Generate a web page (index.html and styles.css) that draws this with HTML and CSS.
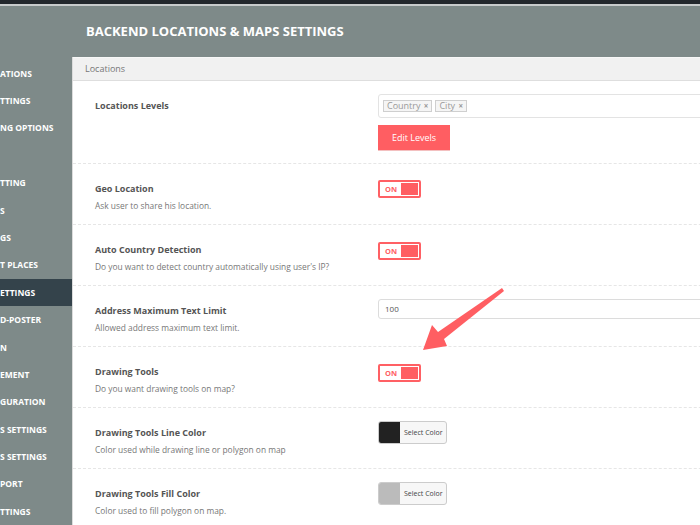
FILE: index.html
```html
<!DOCTYPE html>
<html>
<head>
<meta charset="utf-8">
<link rel="stylesheet" href="styles.css">
</head>
<body>
<div class="topbar"></div>
<div class="topline"></div>
<div class="layout">
  <nav class="sidebar">
    <div class="nav-item">ATIONS</div>
    <div class="nav-item">TTINGS</div>
    <div class="nav-item">NG OPTIONS</div>
    <div class="nav-item"></div>
    <div class="nav-item">TTING</div>
    <div class="nav-item">S</div>
    <div class="nav-item">GS</div>
    <div class="nav-item">T PLACES</div>
    <div class="nav-item active">ETTINGS</div>
    <div class="nav-item">D-POSTER</div>
    <div class="nav-item">N</div>
    <div class="nav-item">EMENT</div>
    <div class="nav-item">GURATION</div>
    <div class="nav-item">S SETTINGS</div>
    <div class="nav-item">S SETTINGS</div>
    <div class="nav-item">PORT</div>
    <div class="nav-item">TTINGS</div>
  </nav>
  <main class="main">
    <h1 class="page-title">BACKEND LOCATIONS &amp; MAPS SETTINGS</h1>
    <section class="panel">
      <div class="panel-head">Locations</div>
      <div class="row row-first">
        <div class="info"><div class="label">Locations Levels</div></div>
        <div class="ctrl ctrl-box">
          <div class="tagbox">
            <span class="tag">Country <span class="x">×</span></span>
            <span class="tag">City <span class="x">×</span></span>
          </div>
          <button class="btn">Edit Levels</button>
        </div>
      </div>
      <div class="row">
        <div class="info"><div class="label">Geo Location</div><div class="desc">Ask user to share his location.</div></div>
        <div class="ctrl ctrl-toggle first"><div class="toggle"><span class="on">ON</span><span class="knob"></span></div></div>
      </div>
      <div class="row">
        <div class="info"><div class="label">Auto Country Detection</div><div class="desc">Do you want to detect country automatically using user's IP?</div></div>
        <div class="ctrl ctrl-toggle"><div class="toggle"><span class="on">ON</span><span class="knob"></span></div></div>
      </div>
      <div class="row">
        <div class="info"><div class="label">Address Maximum Text Limit</div><div class="desc">Allowed address maximum text limit.</div></div>
        <div class="ctrl ctrl-box"><div class="input">100</div></div>
      </div>
      <div class="row">
        <div class="info"><div class="label">Drawing Tools</div><div class="desc">Do you want drawing tools on map?</div></div>
        <div class="ctrl ctrl-toggle"><div class="toggle"><span class="on">ON</span><span class="knob"></span></div></div>
      </div>
      <div class="row">
        <div class="info"><div class="label">Drawing Tools Line Color</div><div class="desc">Color used while drawing line or polygon on map</div></div>
        <div class="ctrl ctrl-box"><div class="picker"><span class="swatch dark"></span><span class="pick-label">Select Color</span></div></div>
      </div>
      <div class="row">
        <div class="info"><div class="label">Drawing Tools Fill Color</div><div class="desc">Color used to fill polygon on map.</div></div>
        <div class="ctrl ctrl-box"><div class="picker"><span class="swatch light"></span><span class="pick-label">Select Color</span></div></div>
      </div>
    </section>
  </main>
</div>
<svg class="arrow" width="700" height="525" viewBox="0 0 700 525">
  <polygon points="502,288 504,291 444,339 447,346 423,350 432,325 438,332" fill="#ff5e62"/>
</svg>
</body>
</html>
```

FILE: styles.css
```css
html, body {
  margin: 0;
  padding: 0;
}
body {
  width: 700px;
  height: 525px;
  overflow: hidden;
  background: #7e8a89;
  font-family: "Open Sans", "DejaVu Sans", sans-serif;
  position: relative;
}
.topbar {
  height: 4px;
  background: #23282d;
}
.topline {
  height: 2px;
  background: #c8cccc;
}
.layout {
  display: flex;
}
.sidebar {
  width: 72px;
  flex-shrink: 0;
  padding-top: 53.6px;
  overflow: hidden;
}
.nav-item {
  height: 27.4px;
  line-height: 27.4px;
  color: #fff;
  font-weight: 700;
  font-size: 8.5px;
  white-space: nowrap;
}
.nav-item.active {
  background: #34434b;
}
.main {
  width: 800px;
  flex-shrink: 0;
}
.page-title {
  margin: 0;
  height: 52px;
  line-height: 50px;
  padding-left: 14px;
  color: #fff;
  font-size: 13px;
  font-weight: 700;
}
.panel {
  background: #fff;
  border-left: 1px solid #dcdcdc;
  min-height: 500px;
}
.panel-head {
  height: 22px;
  line-height: 22px;
  background: #f1f1f1;
  border-top: 1px solid #f7f7f7;
  border-bottom: 1px solid #dedede;
  padding-left: 12px;
  font-size: 9px;
  color: #777;
  margin-top: -1px;
}
.row {
  display: grid;
  grid-template-columns: 283px 1fr;
  padding: 19px 0 12px 22px;
  border-bottom: 1px dashed #e6e6e6;
}
.row.row-first {
  padding-bottom: 13px;
}
.label {
  font-size: 9px;
  font-weight: 700;
  color: #555;
  line-height: 12px;
}
.desc {
  margin-top: 5px;
  font-size: 8.4px;
  color: #777;
  line-height: 12px;
}
.ctrl-box {
  margin-top: -6px;
}
.ctrl-toggle {
  margin-top: -2px;
}
.ctrl-toggle.first {
  margin-top: -3px;
}
.tagbox {
  width: 400px;
  height: 24px;
  box-sizing: border-box;
  border: 1px solid #e3e3e3;
  border-radius: 3px;
  padding: 5px 4px;
  display: flex;
  gap: 3px;
}
.tag {
  height: 12px;
  box-sizing: border-box;
  border: 1px solid #cfcfcf;
  background: #f5f5f5;
  color: #999;
  font-size: 9px;
  line-height: 10px;
  padding: 0 3px;
}
.tag .x {
  color: #999;
  font-size: 8px;
  font-weight: 700;
  margin-left: 1px;
}
.btn {
  display: block;
  margin-top: 7px;
  width: 72px;
  height: 25px;
  border: none;
  border-radius: 0;
  background: #ff5e62;
  color: #fff;
  font-family: "Open Sans", sans-serif;
  font-size: 9px;
  padding: 0;
  box-shadow: 0 1px 0 #f3c0c0;
}
.toggle {
  width: 43px;
  height: 18px;
  box-sizing: border-box;
  border: 2px solid #ff6064;
  border-radius: 2px;
  display: flex;
  align-items: center;
  justify-content: space-between;
  padding: 0 1px 0 5px;
}
.on {
  color: #ff6064;
  font-size: 7.5px;
  font-weight: 700;
}
.knob {
  width: 17px;
  height: 12px;
  background: #ff5e62;
}
.input {
  width: 400px;
  height: 20px;
  box-sizing: border-box;
  border: 1px solid #dcdcdc;
  border-radius: 3px;
  padding-left: 6px;
  line-height: 18px;
  font-size: 8px;
  color: #555;
}
.picker {
  display: flex;
  width: 69px;
  height: 23px;
  box-sizing: border-box;
  border: 1px solid #cccccc;
  border-radius: 3px;
  overflow: hidden;
  background: #f7f7f7;
}
.swatch {
  width: 21px;
  height: 100%;
}
.swatch.dark {
  background: #222;
}
.swatch.light {
  background: #bbb;
}
.pick-label {
  font-size: 7px;
  color: #444;
  line-height: 21px;
  padding-left: 4px;
  white-space: nowrap;
}
.arrow {
  position: absolute;
  left: 0;
  top: 0;
  pointer-events: none;
}
```
